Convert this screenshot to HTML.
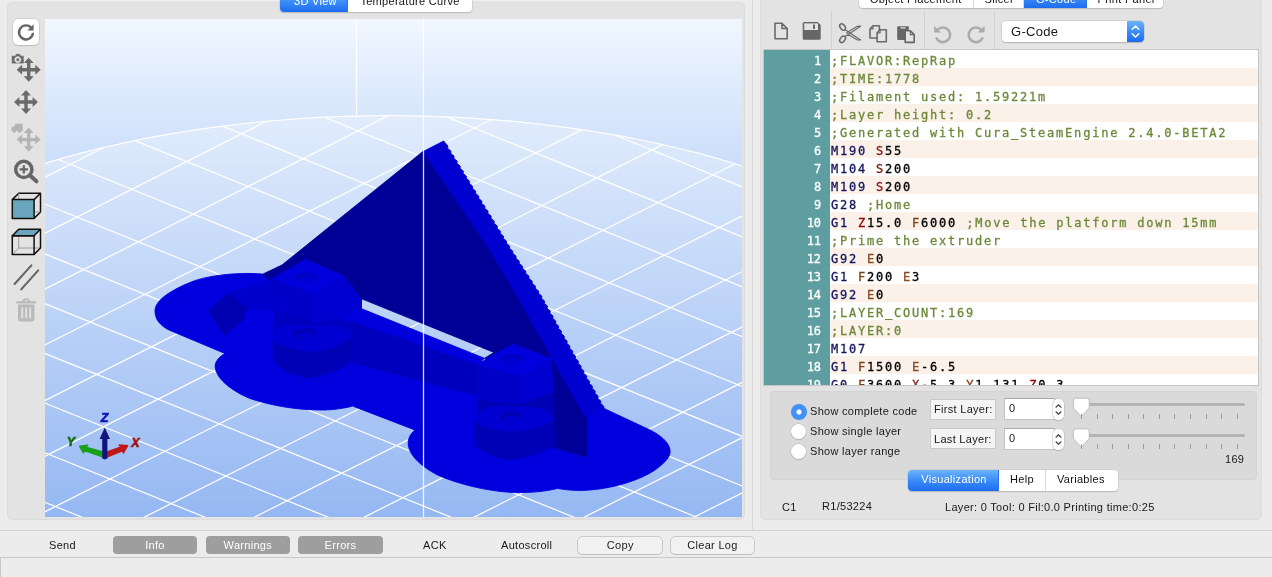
<!DOCTYPE html>
<html lang="en">
<head>
<meta charset="utf-8">
<title>Repetier-Host</title>
<style>
*{box-sizing:border-box;margin:0;padding:0}
html,body{width:1272px;height:577px;overflow:hidden;background:#ececec}
body{position:relative;font-family:"Liberation Sans",sans-serif;font-size:11px;color:#181818;-webkit-font-smoothing:antialiased}
.abs{position:absolute}
.t{position:absolute;white-space:nowrap;line-height:14px;height:14px;letter-spacing:.3px}
/* left group */
#lgroup{left:7px;top:2px;width:738px;height:518px;background:#e3e3e3;border:1px solid #dcdcdc;border-radius:5px}
#view{left:45px;top:19px;width:697px;height:498px;overflow:hidden;background:linear-gradient(#f0f7ff 0%,#72a0ee 100%)}
#view svg{position:absolute;left:0;top:0}
.bed{fill:#ffffff;fill-opacity:.25;stroke:#fff;stroke-width:1.2}
.grid line{stroke:#fff;stroke-width:1.25}
/* segmented tabs */
.seg{position:absolute;display:flex;height:20.5px;letter-spacing:.3px;border-radius:4px;background:#fff;box-shadow:0 0 0 .5px #c4c4c4,0 1px 1px rgba(0,0,0,.22);font-size:11px;overflow:hidden}
.seg div{position:relative;height:20.5px;border-right:1px solid #d9d9d9;color:#111}
.seg div:last-child{border-right:0}
.seg div.on{background:linear-gradient(#6cb3fa,#3a8cf7 50%,#1d6cf0);color:#fff;border-right-color:#2a72e8}
.seg span{position:absolute;white-space:nowrap;top:2px;line-height:16px}
/* splitter */
#split{left:752px;top:0;width:1px;height:530px;background:#d9d9d9}
/* right group */
#rgroup{left:760px;top:-10px;width:502px;height:530px;background:#e3e3e3;border-radius:5px;border:1px solid #dcdcdc}
.vsep{position:absolute;top:11px;width:1px;height:39px;background:#d2d2d2}
#combo{left:1002px;top:21px;width:142px;height:21px;border-radius:4px;background:#fff;box-shadow:0 0 0 .5px #c0c0c0,0 1px 1px rgba(0,0,0,.25);overflow:hidden}
#combo i{position:absolute;right:0;top:0;width:17px;height:21px;background:linear-gradient(#6db4fb,#3b8df8 50%,#1c6bf0)}
/* editor */
#editor{left:764px;top:50px;width:494px;height:335px;background:#fff;overflow:hidden;box-shadow:0 0 0 1px #c6c6c6}
#editor .ln{position:relative;height:18px;line-height:18px;font-family:"DejaVu Sans Mono","Liberation Mono",monospace;font-size:12px;white-space:pre;background:#fff}
#editor .ln.alt{background:#fbf1e8}
#editor .no{position:absolute;left:0;top:0;width:66px;height:18px;background:#5f9ea0;color:#fff;text-align:right;padding-right:9px;padding-top:2px;letter-spacing:-.1px;-webkit-text-stroke:.3px #fff}
#editor .tx{position:absolute;left:67px;top:2px;-webkit-text-stroke:.3px;letter-spacing:1.78px;color:#000}
.c{color:#6c893a}.g{color:#15155e}.s{color:#861818}.f{color:#7c3e14}.e{color:#8c4826}.z{color:#8b0505}.x{color:#861818}.y{color:#7c3e14}
/* inner group */
#igroup{left:770px;top:391px;width:487px;height:89px;background:#dadada;border-radius:4px;border:1px solid #d3d3d3}
.radio{position:absolute;width:15px;height:15px;border-radius:50%;background:#fff;box-shadow:0 0 0 .5px #b9b9b9,0 1px 1px rgba(0,0,0,.2)}
.radio.on{background:radial-gradient(circle,#fff 0,#fff 2.2px,#3f8ff7 3px,#4a98f9 100%);box-shadow:none;width:15.6px;height:15.6px;margin:-.3px}
.lbox{position:absolute;height:21px;background:#f4f4f4;border:1px solid #c9c9c9;font-size:11px}
.nbox{position:absolute;height:22px;background:#fff;border:1px solid #c4c4c4;border-top-color:#a9a9a9}
.step{position:absolute;width:11px;height:21px;border-radius:5px;background:#fff;box-shadow:0 0 0 .5px #bdbdbd,0 1px 1px rgba(0,0,0,.2)}
.track{position:absolute;height:3.4px;border-radius:2px;background:#b4b4b4}
.tick{position:absolute;width:1px;height:5px;background:#9a9a9a}
.btn{position:absolute;letter-spacing:.3px;height:18px;border-radius:4px;text-align:center;font-size:11px;line-height:18px}
.btn.d{background:#9e9e9e;color:#fff}
.btn.l{background:#f1f1f1;box-shadow:0 0 0 .5px #a8a8a8,0 .5px .5px rgba(0,0,0,.2);color:#1c1c1c}
.hl{position:absolute;left:0;width:1272px;height:1px}
</style>
</head>
<body>
<div id="root" style="position:absolute;left:0;top:0;width:1272px;height:577px;will-change:transform">
<!-- left group with 3D view -->
<div id="lgroup" class="abs"></div>
<div id="view" class="abs">
<svg width="697" height="498" viewBox="0 0 697 498">
<polygon class="bed" points="755.0,167.8 770.7,174.4 785.8,181.2 800.4,188.3 814.5,195.6 827.9,203.1 840.8,210.9 853.1,218.8 864.7,226.9 875.8,235.2 886.1,243.7 895.8,252.3 904.9,261.0 913.2,269.9 920.8,278.9 927.8,288.1 934.0,297.3 939.5,306.6 944.3,316.1 948.4,325.5 951.7,335.1 954.3,344.6 956.1,354.3 957.2,363.9 957.6,373.5 957.2,383.2 956.0,392.8 954.1,402.4 951.5,412.0 948.2,421.5 944.1,431.0 939.3,440.3 933.7,449.7 927.5,458.9 920.5,468.0 912.8,477.0 904.5,485.8 895.5,494.6 885.8,503.1 875.4,511.6 864.4,519.8 852.8,527.9 840.6,535.8 827.7,543.5 814.3,551.0 800.3,558.2 785.8,565.3 770.7,572.1 755.1,578.7 739.1,585.0 722.5,591.1 705.5,596.9 688.0,602.4 670.2,607.6 651.9,612.6 633.3,617.3 614.3,621.7 595.0,625.8 575.4,629.6 555.5,633.0 535.4,636.2 515.0,639.0 494.4,641.5 473.7,643.7 452.7,645.6 431.7,647.1 410.5,648.3 389.3,649.2 368.0,649.8 346.7,650.0 325.4,649.8 304.1,649.4 282.8,648.6 261.6,647.4 240.5,646.0 219.6,644.2 198.8,642.1 178.1,639.6 157.7,636.9 137.5,633.8 117.5,630.4 97.8,626.7 78.5,622.6 59.4,618.3 40.7,613.7 22.3,608.8 4.3,603.6 -13.2,598.1 -30.4,592.4 -47.0,586.3 -63.3,580.1 -79.0,573.5 -94.2,566.8 -108.8,559.7 -123.0,552.5 -136.5,545.1 -149.5,537.4 -161.9,529.5 -173.6,521.5 -184.8,513.2 -195.2,504.8 -205.1,496.3 -214.2,487.5 -222.7,478.7 -230.5,469.7 -237.6,460.6 -244.0,451.4 -249.7,442.0 -254.7,432.7 -258.9,423.2 -262.4,413.6 -265.1,404.1 -267.1,394.4 -268.4,384.8 -268.9,375.1 -268.6,365.5 -267.7,355.8 -265.9,346.2 -263.4,336.6 -260.2,327.0 -256.3,317.5 -251.6,308.0 -246.1,298.7 -240.0,289.4 -233.1,280.2 -225.5,271.2 -217.3,262.2 -208.3,253.4 -198.7,244.8 -188.3,236.3 -177.4,228.0 -165.8,219.8 -153.6,211.8 -140.7,204.1 -127.3,196.5 -113.3,189.2 -98.7,182.1 -83.6,175.2 -67.9,168.5 -51.8,162.1 -35.1,156.0 -18.0,150.1 -0.5,144.6 17.5,139.2 35.9,134.2 54.6,129.5 73.8,125.1 93.2,120.9 113.0,117.1 133.0,113.6 153.3,110.4 173.8,107.6 194.6,105.0 215.5,102.8 236.6,101.0 257.8,99.4 279.1,98.2 300.5,97.4 322.0,96.8 343.4,96.6 364.9,96.8 386.4,97.3 407.8,98.1 429.1,99.3 450.3,100.8 471.4,102.6 492.3,104.8 513.1,107.3 533.6,110.1 553.9,113.3 574.0,116.7 593.7,120.5 613.2,124.6 632.3,129.0 651.1,133.7 669.5,138.7 687.5,144.0 705.0,149.5 722.2,155.4 738.8,161.4 755.0,167.8"/>
<g class="grid">
<line x1="-197.4" y1="503.0" x2="121.8" y2="631.1"/>
<line x1="-255.9" y1="430.0" x2="288.8" y2="648.8"/>
<line x1="-268.9" y1="375.2" x2="410.4" y2="648.4"/>
<line x1="-260.9" y1="328.8" x2="511.1" y2="639.5"/>
<line x1="-238.9" y1="287.9" x2="598.1" y2="625.1"/>
<line x1="-206.1" y1="251.4" x2="674.4" y2="606.4"/>
<line x1="-163.9" y1="218.6" x2="741.6" y2="584.0"/>
<line x1="-113.3" y1="189.2" x2="800.3" y2="558.2"/>
<line x1="-54.3" y1="163.1" x2="851.0" y2="529.1"/>
<line x1="13.2" y1="140.5" x2="893.2" y2="496.6"/>
<line x1="90.0" y1="121.6" x2="926.4" y2="460.3"/>
<line x1="177.7" y1="107.1" x2="948.9" y2="419.7"/>
<line x1="279.3" y1="98.2" x2="957.6" y2="373.5"/>
<line x1="401.8" y1="97.9" x2="945.5" y2="318.7"/>
<line x1="569.7" y1="116.0" x2="888.3" y2="245.5"/>
<line x1="-227.2" y1="273.1" x2="58.7" y2="128.5"/>
<line x1="-266.5" y1="348.9" x2="221.4" y2="102.3"/>
<line x1="-265.1" y1="404.0" x2="343.3" y2="96.6"/>
<line x1="-245.1" y1="449.6" x2="446.3" y2="100.5"/>
<line x1="-212.8" y1="488.9" x2="536.9" y2="110.6"/>
<line x1="-170.9" y1="523.4" x2="617.7" y2="125.6"/>
<line x1="-120.8" y1="553.6" x2="690.2" y2="144.8"/>
<line x1="-63.3" y1="580.1" x2="755.0" y2="167.8"/>
<line x1="1.6" y1="602.8" x2="812.4" y2="194.5"/>
<line x1="73.9" y1="621.6" x2="862.1" y2="225.0"/>
<line x1="154.4" y1="636.4" x2="903.4" y2="259.6"/>
<line x1="244.5" y1="646.3" x2="935.1" y2="299.1"/>
<line x1="346.9" y1="650.0" x2="954.3" y2="344.7"/>
<line x1="467.8" y1="644.3" x2="954.8" y2="399.7"/>
<line x1="629.2" y1="618.3" x2="914.6" y2="475.0"/>
</g>

<line x1="311.5" y1="0" x2="311.5" y2="96" stroke="#fff" stroke-width="1.3"/>
<g transform="translate(-45,-19)">
<path fill="#0000de" stroke="#0000de" stroke-width=".9" stroke-linejoin="round" d="M262,274 C240,272 205,275 187.5,283.5 C168,292 155,301 155,311 C155,320 161,326 169,330 L225,353.5 C217,358 214,364 215.5,369 C218,380 232,391 250,398.5 C272,406 300,410.5 325,410 C336,409.5 346,408 352.5,406 L415,430 C409,435 407.5,441 408.5,446 C410,456 422,467 437.5,475 C458,484 486,491 512.5,492.5 C530,493 545,491.5 557.5,488.5 C570,490.5 580,491 590,490 C615,488 640,480 655,470 C666,462 671,456 670,450 C669,442 660,435 650,430 L604,408.5 L585,417 L540,400 L484,362 L361,312 L300,295 Z"/>
<path fill="#000096" stroke="#000096" stroke-width=".9" stroke-linejoin="round" d="M423.5,151 L490.5,250 L517.2,295 L586.5,417 L586.5,457 L555,447.5 L540,400 L484.7,358.2 L494,352.4 L361.2,298.6 L361.2,308.4 L340,312 L300,300 L262,274.5 L282,265 Z"/>
<path fill="#0000d0" stroke="#0000d0" stroke-width=".9" stroke-linejoin="round" d="M423.3,151.5 L443.7,141 L447.8,146.0 L447.7,148.5 L450.9,151.0 L450.8,153.5 L454.0,156.0 L453.9,158.5 L457.1,161.0 L457.0,163.5 L460.2,166.0 L460.1,168.5 L463.3,171.0 L463.2,173.5 L466.3,176.0 L466.3,178.5 L469.4,181.0 L469.4,183.5 L472.5,186.0 L472.5,188.5 L475.6,191.0 L475.6,193.5 L478.7,196.0 L478.7,198.5 L481.8,201.0 L481.7,203.5 L484.9,206.0 L484.8,208.5 L488.0,211.0 L487.9,213.5 L491.1,216.0 L491.0,218.5 L494.2,221.0 L494.1,223.5 L497.3,226.0 L497.2,228.5 L500.4,231.0 L500.3,233.5 L503.4,236.0 L503.4,238.5 L506.5,241.0 L506.5,243.5 L509.6,246.0 L509.6,248.5 L512.7,251.0 L512.8,253.5 L516.0,256.0 L516.0,258.5 L519.2,261.0 L519.2,263.5 L522.4,266.0 L522.5,268.5 L525.7,271.0 L525.7,273.5 L528.9,276.0 L528.9,278.5 L532.1,281.0 L532.2,283.5 L535.4,286.0 L535.4,288.5 L538.6,291.0 L538.6,293.5 L541.8,296.0 L541.6,298.5 L544.6,301.0 L544.4,303.5 L547.4,306.0 L547.2,308.5 L550.2,311.0 L550.0,313.5 L553.0,316.0 L552.8,318.5 L555.8,321.0 L555.6,323.5 L558.6,326.0 L558.4,328.5 L561.4,331.0 L561.2,333.5 L564.2,336.0 L564.1,338.5 L567.1,341.0 L566.9,343.5 L569.9,346.0 L569.7,348.5 L572.7,351.0 L572.5,353.5 L575.5,356.0 L575.3,358.5 L578.3,361.0 L578.1,363.5 L581.1,366.0 L580.9,368.5 L583.9,371.0 L583.7,373.5 L586.7,376.0 L586.5,378.5 L589.5,381.0 L589.3,383.5 L592.4,386.0 L592.2,388.5 L595.2,391.0 L595.0,393.5 L598.0,396.0 L597.8,398.5 L600.8,401.0 L600.6,403.5 L603.6,406.0 L604,408.5 L585.5,417.5 L516.6,295 L489.9,250 Z"/>
<path fill="#0000b4" stroke="#0000b4" stroke-width=".9" stroke-linejoin="round" d="M478,398 L553,390 L556,448 L476,444 Z"/>
<path fill="#0000c0" stroke="#0000c0" stroke-width=".9" stroke-linejoin="round" d="M275,308 L352,318 L352,360 L273,352 Z"/>
<path fill="#0000cc" stroke="#0000cc" stroke-width=".9" stroke-linejoin="round" d="M228,293.3 L261,283.8 L273,278.6 L275,310 L247,308 Z"/>
<path fill="#0000b0" stroke="#0000b0" stroke-width=".9" stroke-linejoin="round" d="M209,310.7 L228,293.3 L247,308 L243,320 L224.5,335 Z"/>
<path fill="#0000de" stroke="#0000de" stroke-width=".9" stroke-linejoin="round" d="M338,318 L361.2,308.6 L484.7,358.4 L475.7,364.5 L351.8,321.8 Z"/>
<path fill="#0000bc" stroke="#0000bc" stroke-width=".9" stroke-linejoin="round" d="M351.8,321.8 L479,365.6 L480,396.3 L351.8,362.4 Z"/>
<path fill="#0000b6" stroke="#0000b6" stroke-width=".9" stroke-linejoin="round" d="M272.6,340.6 L312.4,351.5 L351.4,336 L350,362.4 Q330,376 307.7,378 Q284,374 275,362.4 Z"/>
<path fill="#0000d2" stroke="#0000d2" stroke-width=".9" stroke-linejoin="round" d="M272.6,340.6 Q274,330 285.9,325.7 L337.4,326.5 Q350,329 351.4,336 Q335,350 312.4,351.5 Q285,349 272.6,340.6 Z"/>
<ellipse cx="305.500" cy="333.500" rx="12.500" ry="5.200" fill="#0000b4"/>
<ellipse cx="307" cy="335.500" rx="9" ry="3.200" fill="#0000cc"/>
<path fill="#0000c8" stroke="#0000c8" stroke-width=".9" stroke-linejoin="round" d="M273,278.6 L313,293.3 L315,322.5 L274,309 Z"/>
<path fill="#0000d0" stroke="#0000d0" stroke-width=".9" stroke-linejoin="round" d="M313,293.3 L344,276 L361.5,299 L361.5,308 L338,318 L315,322.5 Z"/>
<path fill="#0000dc" stroke="#0000dc" stroke-width=".9" stroke-linejoin="round" d="M273,278.6 L305,259.5 L344,276 L313,293.3 Z"/>
<ellipse cx="306.500" cy="277.500" rx="11.500" ry="5" fill="#0000c2"/>
<ellipse cx="308" cy="279.300" rx="8" ry="3" fill="#0000d4"/>
<path fill="#0000b6" stroke="#0000b6" stroke-width=".9" stroke-linejoin="round" d="M475,421.2 L510,431 L552.5,420 L550,447.5 Q530,458 507.5,460 Q485,455 475,445 Z"/>
<path fill="#0000d2" stroke="#0000d2" stroke-width=".9" stroke-linejoin="round" d="M475,421.2 Q477,411 492.5,406.2 L540,408 Q551,411 552.5,420 Q535,431 510,431 Q487,430 475,421.2 Z"/>
<ellipse cx="511" cy="416.500" rx="12" ry="5" fill="#0000b4"/>
<ellipse cx="512.500" cy="418.500" rx="8.500" ry="3" fill="#0000cc"/>
<path fill="#0000c8" stroke="#0000c8" stroke-width=".9" stroke-linejoin="round" d="M477.8,364 L522,376 L519,404 L478.4,400 Z"/>
<path fill="#0000d0" stroke="#0000d0" stroke-width=".9" stroke-linejoin="round" d="M522,376 L551.4,358.9 L553,392 L519,404 Z"/>
<path fill="#0000dc" stroke="#0000dc" stroke-width=".9" stroke-linejoin="round" d="M477.8,364 L513.3,344 L551.4,358.9 L522,376 Z"/>
<ellipse cx="512" cy="359.500" rx="11.500" ry="5" fill="#0000c2"/>
<ellipse cx="513.500" cy="361.300" rx="8" ry="3" fill="#0000d4"/>
</g>
<g transform="translate(-45,-19)">
<path d="M104.800,457.500 L82.500,449.800 L83.500,452.800 L79.800,446.400 L87.600,445.200 L85,447 L105.500,452.800 Z" fill="#18a018" stroke="#18a018" stroke-width="1.600" stroke-linejoin="round"/>
<path d="M104.800,457.800 L124.200,450 L123.300,452.900 L127.600,445.700 L119.300,445 L121.800,446.800 L104.500,453 Z" fill="#c01818" stroke="#c01818" stroke-width="1.600" stroke-linejoin="round"/>
<path d="M102.200,458.400 L102.200,439 L99.600,439 L104.800,427.600 L110,439 L107.400,439 L107.400,458.400 L104.800,459.400 Z" fill="#14147e"/>
<g style="font:italic bold 12.5px 'Liberation Sans',sans-serif" text-anchor="middle" stroke-width=".7" stroke-linejoin="round">
<text x="104.500" y="421.800" fill="#1616b4" stroke="#1616b4">Z</text>
<text x="135.300" y="447" fill="#9c1616" stroke="#9c1616">X</text>
<text x="70.800" y="445.800" fill="#167016" stroke="#167016">Y</text>
</g>
</g>

<line x1="378.5" y1="0" x2="378.5" y2="498" stroke="#fff" stroke-opacity=".85" stroke-width="1.3"/>
</svg>
</div>
<div class="seg" style="left:280px;top:-8.5px;width:192px">
 <div class="on" style="width:68px"><span id="s1" style="left:14px;top:1.3px">3D View</span></div>
 <div style="width:124px"><span id="s2" style="left:12.4px;top:1.3px">Temperature Curve</span></div>
</div>
<div class="abs" style="left:12.600px;top:19.300px;width:26.800px;height:25.800px;border-radius:5px;background:#fff;box-shadow:0 0 0 .5px #bdbdbd,0 1px 1px rgba(0,0,0,.18)"></div>
<svg class="abs" style="left:0;top:0" width="60" height="330" viewBox="0 0 60 330">
<!-- refresh -->
<g fill="none" stroke="#666" stroke-width="2.4">
<path d="M31.6,28.2 A7,7 0 1 0 33,32.8"/>
</g>
<path d="M33.6,24.2 L33.6,30.6 L27.4,30.6 Z" fill="#666"/>
<!-- camera + move -->
<g fill="#6a6a6a">
<path transform="translate(28.7,69.7)" d="M0,-12 L5,-6.6 L1.7,-6.6 L1.7,-1.7 L6.6,-1.7 L6.6,-5 L12,0 L6.6,5 L6.6,1.7 L1.7,1.7 L1.7,6.6 L5,6.6 L0,12 L-5,6.6 L-1.7,6.6 L-1.7,1.7 L-6.6,1.7 L-6.6,5 L-12,0 L-6.6,-5 L-6.6,-1.7 L-1.7,-1.7 L-1.7,-6.6 L-5,-6.6 Z"/>
<path d="M12.5,55.6 h2.6 l1,-1.9 h3.8 l1,1.9 h2.1 q1,0 1,1 v6.2 q0,1 -1,1 h-10.5 q-1,0 -1,-1 v-6.2 q0,-1 1,-1 Z M17.8,56.6 a3.1,3.1 0 1 0 .01,0 Z M17.8,58 a1.7,1.7 0 1 1 -.01,0 Z" fill-rule="evenodd" stroke="#e3e3e3" stroke-width=".6"/>
<!-- move -->
<path transform="translate(26,102)" d="M0,-12 L5,-6.6 L1.7,-6.6 L1.7,-1.7 L6.6,-1.7 L6.6,-5 L12,0 L6.6,5 L6.6,1.7 L1.7,1.7 L1.7,6.6 L5,6.6 L0,12 L-5,6.6 L-1.7,6.6 L-1.7,1.7 L-6.6,1.7 L-6.6,5 L-12,0 L-6.6,-5 L-6.6,-1.7 L-1.7,-1.7 L-1.7,-6.6 L-5,-6.6 Z"/>
</g>
<!-- truck + move (disabled) -->
<g fill="#b4b4b4">
<path transform="translate(28.7,139.6)" d="M0,-12 L5,-6.6 L1.7,-6.6 L1.7,-1.7 L6.6,-1.7 L6.6,-5 L12,0 L6.6,5 L6.6,1.7 L1.7,1.7 L1.7,6.6 L5,6.6 L0,12 L-5,6.6 L-1.7,6.6 L-1.7,1.7 L-6.6,1.7 L-6.6,5 L-12,0 L-6.6,-5 L-6.6,-1.7 L-1.7,-1.7 L-1.7,-6.6 L-5,-6.6 Z"/>
<path d="M11.2,128 q0,-1.2 1.2,-1.2 h1.3 l1.3,-2.6 q.3,-.6 1,-.6 h6 q1,0 1,1 v6.6 h-1.6 a1.9,1.9 0 0 1 -3.8,0 h-1.4 a1.9,1.9 0 0 1 -3.8,0 h-1.2 Z" stroke="#e3e3e3" stroke-width=".6"/>
</g>
<!-- zoom -->
<g fill="none" stroke="#666">
<circle cx="23.800" cy="169.400" r="8.100" stroke-width="3.500"/>
<path d="M30.400,175.800 L36.400,181.300" stroke-width="4" stroke-linecap="round"/>
<path d="M19.6,169.4 h8.4 M23.8,165.2 v8.4" stroke-width="2.2"/>
</g>
<!-- cube 1 -->
<g fill="none" stroke="#111" stroke-width="1.5" stroke-linejoin="round">
<path d="M12.3,199.6 L18.7,193.2 H40.5 V212 L34.1,218.4" />
<path d="M18.7,193.2 V212 H40.5 M18.7,212 L12.3,218.4" stroke="#8a8a8a" stroke-width=".8"/>
<rect x="12.3" y="199.6" width="21.8" height="18.8" fill="#69a6bd"/>
<path d="M34.1,199.6 L40.5,193.2"/>
</g>
<!-- cube 2 -->
<g fill="none" stroke="#111" stroke-width="1.5" stroke-linejoin="round">
<path d="M18.7,229.3 V248 H40.5 M18.7,248 L12.3,254.4" stroke="#8a8a8a" stroke-width=".8"/>
<path d="M12.3,235.7 L18.7,229.3 H40.5 L34.1,235.7 Z" fill="#69a6bd"/>
<rect x="12.3" y="235.7" width="21.8" height="18.7"/>
<path d="M40.5,229.3 V248 L34.1,254.4"/>
</g>
<!-- parallel -->
<path d="M14.6,284 L31.4,265.4 M21.2,289.4 L38.2,270.4" stroke="#666" stroke-width="2.1" stroke-linecap="round"/>
<!-- trash -->
<g fill="#b9b9b9">
<path d="M16.4,301.2 h6 q.4,-3 3.8,-3 q3.400,0 3.800,3 h6 v2.300 h-19.600 Z M24.300,301.200 h3.800 q-.300,-1.200 -1.900,-1.200 q-1.600,0 -1.900,1.200 Z" fill-rule="evenodd"/>
<path d="M18,304.600 h16.400 v14.200 q0,2.600 -2.600,2.600 h-11.200 q-2.600,0 -2.600,-2.600 Z M21.300,307.400 v10.800 h1.900 v-10.800 Z M25.250,307.400 v10.800 h1.900 v-10.800 Z M29.200,307.400 v10.800 h1.900 v-10.800 Z" fill-rule="evenodd"/>
</g>
</svg>

<div id="split" class="abs"></div>
<!-- right group -->
<div id="rgroup" class="abs"></div>
<div class="seg" style="left:859px;top:-13px;width:304px">
 <div style="width:115px"><span id="r1" style="left:11px;top:4.4px">Object Placement</span></div>
 <div style="width:50px"><span id="r2" style="left:10.6px;top:4.4px">Slicer</span></div>
 <div class="on" style="width:63px"><span id="r3" style="left:12px;top:4.4px">G-Code</span></div>
 <div style="width:76px"><span id="r4" style="left:10.5px;top:4.4px">Print Panel</span></div>
</div>
<!-- right toolbar icons -->
<svg class="abs" style="left:765px;top:14px" width="230" height="36" viewBox="765 14 230 36">
<!-- new file -->
<path d="M775,23.300 h7 l5.200,5.200 v10.300 h-12.200 Z M782,23.300 v5.200 h5.200" fill="none" stroke="#6a6a6a" stroke-width="1.600" stroke-linejoin="round"/>
<!-- save -->
<path d="M802.700,23.500 q0,-1.500 1.500,-1.500 h13.500 l3,3 v13.200 q0,1.500 -1.500,1.500 h-15 q-1.500,0 -1.500,-1.500 Z" fill="#666"/>
<rect x="804.200" y="23.400" width="13.800" height="6.600" fill="#e3e3e3"/>
<rect x="813" y="24.500" width="2" height="4.400" fill="#666"/>
<!-- scissors -->
<g fill="none" stroke="#6a6a6a" stroke-width="1.500">
<ellipse cx="842.600" cy="27" rx="2.300" ry="3.600" transform="rotate(-38 842.600 27)"/>
<ellipse cx="842.600" cy="39.300" rx="2.300" ry="3.600" transform="rotate(38 842.600 39.300)"/>
<path d="M844.800,29.600 L860.600,40 L857,39.800 L846.500,33.600 M844.800,36.700 L860.600,26.200 L857,26.400 L846.500,32.700" stroke-width="1.200" stroke-linejoin="round"/>
</g>
<!-- copy -->
<g fill="#e3e3e3" stroke="#6a6a6a" stroke-width="1.600" stroke-linejoin="round">
<path d="M870,28.800 l3,-3 h6.400 v12.200 h-9.400 Z"/>
<path d="M870,28.800 h3 v-3" fill="none" stroke-width="1.200"/>
<path d="M877.100,32.800 l3,-3 h6.200 v12 h-9.200 Z"/>
<path d="M877.100,32.800 h3 v-3" fill="none" stroke-width="1.200"/>
</g>
<!-- paste -->
<rect x="897.200" y="26.300" width="11.600" height="13.600" rx="1" fill="#666"/>
<rect x="900.500" y="27.300" width="5" height="1.200" fill="#e3e3e3"/>
<path d="M905.200,30.800 h5.200 l3.800,3.800 v7.800 h-9 Z" fill="#e3e3e3" stroke="#666" stroke-width="1.600" stroke-linejoin="round"/>
<path d="M910.400,30.800 v3.800 h3.800" fill="none" stroke="#666" stroke-width="1.200"/>
<!-- undo -->
<path d="M937.400,30 A7.300,7.300 0 1 1 936,37.400" fill="none" stroke="#ababab" stroke-width="2.500"/>
<path d="M934.200,25.800 L934.200,32.600 L941,32.600 Z" fill="#ababab"/>
<!-- redo -->
<path d="M981.400,30 A7.300,7.300 0 1 0 982.800,37.400" fill="none" stroke="#ababab" stroke-width="2.500"/>
<path d="M984.600,25.800 L984.600,32.600 L977.800,32.600 Z" fill="#ababab"/>
</svg>

<div class="vsep" style="left:831px"></div>
<div class="vsep" style="left:924px"></div>
<div class="vsep" style="left:994px"></div>
<div id="combo" class="abs"><span class="t" id="cb" style="left:9px;top:3px;font-size:13px;line-height:15px">G-Code</span><i></i>
<svg class="abs" style="right:0;top:0" width="17" height="21" viewBox="0 0 17 21"><path d="M5.2 8.2 8.5 5 11.8 8.2M5.2 12.8 8.5 16 11.8 12.8" fill="none" stroke="#fff" stroke-width="1.5" stroke-linecap="round" stroke-linejoin="round"/></svg>
</div>
<div id="editor" class="abs">
<div class="ln"><span class="no">1</span><span class="tx"><span class="c">;FLAVOR:RepRap</span></span></div>
<div class="ln alt"><span class="no">2</span><span class="tx"><span class="c">;TIME:1778</span></span></div>
<div class="ln"><span class="no">3</span><span class="tx"><span class="c">;Filament used: 1.59221m</span></span></div>
<div class="ln alt"><span class="no">4</span><span class="tx"><span class="c">;Layer height: 0.2</span></span></div>
<div class="ln"><span class="no">5</span><span class="tx"><span class="c">;Generated with Cura_SteamEngine 2.4.0-BETA2</span></span></div>
<div class="ln alt"><span class="no">6</span><span class="tx"><span class="g">M190</span> <span class="s">S</span>55</span></div>
<div class="ln"><span class="no">7</span><span class="tx"><span class="g">M104</span> <span class="s">S</span>200</span></div>
<div class="ln alt"><span class="no">8</span><span class="tx"><span class="g">M109</span> <span class="s">S</span>200</span></div>
<div class="ln"><span class="no">9</span><span class="tx"><span class="g">G28</span> <span class="c">;Home</span></span></div>
<div class="ln alt"><span class="no">10</span><span class="tx"><span class="g">G1</span> <span class="z">Z</span>15.0 <span class="f">F</span>6000 <span class="c">;Move the platform down 15mm</span></span></div>
<div class="ln"><span class="no">11</span><span class="tx"><span class="c">;Prime the extruder</span></span></div>
<div class="ln alt"><span class="no">12</span><span class="tx"><span class="g">G92</span> <span class="e">E</span>0</span></div>
<div class="ln"><span class="no">13</span><span class="tx"><span class="g">G1</span> <span class="f">F</span>200 <span class="e">E</span>3</span></div>
<div class="ln alt"><span class="no">14</span><span class="tx"><span class="g">G92</span> <span class="e">E</span>0</span></div>
<div class="ln"><span class="no">15</span><span class="tx"><span class="c">;LAYER_COUNT:169</span></span></div>
<div class="ln alt"><span class="no">16</span><span class="tx"><span class="c">;LAYER:0</span></span></div>
<div class="ln"><span class="no">17</span><span class="tx"><span class="g">M107</span></span></div>
<div class="ln alt"><span class="no">18</span><span class="tx"><span class="g">G1</span> <span class="f">F</span>1500 <span class="e">E</span>-6.5</span></div>
<div class="ln"><span class="no">19</span><span class="tx"><span class="g">G0</span> <span class="f">F</span>3600 <span class="x">X</span>-5.3 <span class="y">Y</span>1.131 <span class="z">Z</span>0.3</span></div>
</div>
<div id="igroup" class="abs"></div>
<div class="radio on" style="left:791.4px;top:404.4px"></div>
<div class="radio" style="left:791.4px;top:424.4px"></div>
<div class="radio" style="left:791.4px;top:444.4px"></div>
<span class="t" id="t1" style="left:810px;top:404px">Show complete code</span>
<span class="t" id="t2" style="left:810px;top:424px">Show single layer</span>
<span class="t" id="t3" style="left:810px;top:444px">Show layer range</span>
<div class="lbox" style="left:930px;top:399px;width:66px"><span class="t" id="t4" style="left:3px;top:2px">First Layer:</span></div>
<div class="lbox" style="left:930px;top:428px;width:66px"><span class="t" id="t5" style="left:3px;top:2.800px">Last Layer:</span></div>
<div class="nbox" style="left:1004px;top:398px;width:51px"><span class="t" style="left:4px;top:2px">0</span></div>
<div class="nbox" style="left:1004px;top:428px;width:51px"><span class="t" style="left:4px;top:2px">0</span></div>
<div class="step" style="left:1053px;top:399px"><svg width="11" height="22" viewBox="0 0 11 22"><path d="M3 8.200 5.500 5.800 8 8.200M3 12.800 5.500 15.200 8 12.800" fill="none" stroke="#444" stroke-width="1.2" stroke-linecap="round" stroke-linejoin="round"/></svg></div>
<div class="step" style="left:1053px;top:429px"><svg width="11" height="22" viewBox="0 0 11 22"><path d="M3 8.200 5.500 5.800 8 8.200M3 12.800 5.500 15.200 8 12.800" fill="none" stroke="#444" stroke-width="1.2" stroke-linecap="round" stroke-linejoin="round"/></svg></div>
<div class="track" style="left:1075px;top:402.700px;width:169.500px"></div>
<div class="track" style="left:1075px;top:433.500px;width:169.500px"></div>
<svg class="abs" style="left:1072px;top:396px" width="20" height="56" viewBox="0 0 20 56">
<path d="M1.400,4.400Q1.400,2.200 3.600,2.200H15Q17.200,2.200 17.200,4.400V12L9.300,20.600 1.400,12Z" fill="#fff" stroke="#b2b2b2" stroke-width=".8"/>
<path d="M1.400,35Q1.400,32.800 3.600,32.800H15Q17.200,32.800 17.200,35V42.600L9.300,51.200 1.400,42.600Z" fill="#fff" stroke="#b2b2b2" stroke-width=".8"/>
</svg>
<div class="tick" style="left:1081.0px;top:414px"></div><div class="tick" style="left:1096.6px;top:414px"></div><div class="tick" style="left:1112.1px;top:414px"></div><div class="tick" style="left:1127.7px;top:414px"></div><div class="tick" style="left:1143.2px;top:414px"></div><div class="tick" style="left:1158.8px;top:414px"></div><div class="tick" style="left:1174.4px;top:414px"></div><div class="tick" style="left:1189.9px;top:414px"></div><div class="tick" style="left:1205.5px;top:414px"></div><div class="tick" style="left:1221.0px;top:414px"></div><div class="tick" style="left:1236.6px;top:414px"></div><div class="tick" style="left:1081.0px;top:444px"></div><div class="tick" style="left:1096.6px;top:444px"></div><div class="tick" style="left:1112.1px;top:444px"></div><div class="tick" style="left:1127.7px;top:444px"></div><div class="tick" style="left:1143.2px;top:444px"></div><div class="tick" style="left:1158.8px;top:444px"></div><div class="tick" style="left:1174.4px;top:444px"></div><div class="tick" style="left:1189.9px;top:444px"></div><div class="tick" style="left:1205.5px;top:444px"></div><div class="tick" style="left:1221.0px;top:444px"></div><div class="tick" style="left:1236.6px;top:444px"></div>
<span class="t" style="left:1225px;top:452px">169</span>
<div class="seg" style="left:908px;top:470px;width:210px">
 <div class="on" style="width:91px"><span id="t6" style="left:13.3px;top:1px">Visualization</span></div>
 <div style="width:47px"><span id="t7" style="left:11px;top:1px">Help</span></div>
 <div style="width:72px"><span id="t8" style="left:11px;top:1px">Variables</span></div>
</div>
<span class="t" style="left:782px;top:500px">C1</span>
<span class="t" id="t9" style="left:822px;top:499px">R1/53224</span>
<span class="t" id="t10" style="left:945px;top:500px">Layer: 0 Tool: 0 Fil:0.0 Printing time:0:25</span>
<!-- bottom bar -->
<div class="hl" style="top:530px;background:#d2d2d2"></div>
<div class="hl" style="top:557px;background:#c8c8c8"></div>
<div class="abs" style="left:0;top:558px;width:1px;height:19px;background:#c8c8c8"></div>
<div class="abs" style="left:1px;top:558px;width:1271px;height:19px;background:#ececec"></div>
<span class="t" id="t11" style="left:49px;top:538px">Send</span>
<div class="btn d" style="left:112.700px;top:535.700px;width:84.600px">Info</div>
<div class="btn d" style="left:205.700px;top:535.700px;width:84.300px">Warnings</div>
<div class="btn d" style="left:298.300px;top:535.700px;width:84.300px">Errors</div>
<span class="t" id="t12" style="left:423px;top:538px">ACK</span>
<span class="t" id="t13" style="left:501px;top:538px">Autoscroll</span>
<div class="btn l" style="left:578.300px;top:536.500px;width:84px;height:17px;line-height:17px">Copy</div>
<div class="btn l" style="left:671.300px;top:536.500px;width:82.300px;height:17px;line-height:17px">Clear Log</div>
</div>
</body>
</html>
